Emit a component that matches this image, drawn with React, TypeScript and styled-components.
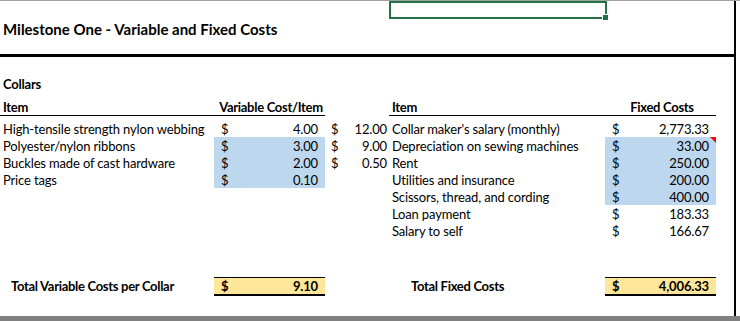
import styled, { createGlobalStyle, css } from "styled-components";

const GlobalStyle = createGlobalStyle`
    html, body {
        margin: 0;
        padding: 0;
        background: #fff;
    }
    body {
        font-family: Lato, "Liberation Sans", sans-serif;
        color: #000;
    }
`;

const Page = styled.div`
    position: relative;
    width: 740px;
    height: 321px;
    overflow: hidden;
    box-sizing: border-box;
    border-top: 1px solid #a0a0a0;
    display: flex;
    flex-direction: column;
`;

const Sheet = styled.div`
    width: 734px;
    flex: 1;
    border-right: 2px solid #000;
    display: flex;
    flex-direction: column;
`;

const TitleBand = styled.div`
    height: 56px;
    flex-shrink: 0;
    box-sizing: border-box;
    border-bottom: 3px solid #000;
    padding: 19px 0 0 3px;
    font-size: 15px;
    font-weight: 700;
    line-height: 18px;
`;

const SectionLabel = styled.div`
    margin-top: 20px;
    height: 15px;
    padding-left: 3px;
    font-size: 13px;
    font-weight: 700;
    letter-spacing: -0.2px;
    line-height: 15px;
`;

const Row = styled.div<{ $height?: number; $gap?: number }>`
    display: grid;
    grid-template-columns: 214px 111px 64px 216px 111px 18px;
    height: ${(p) => p.$height ?? 17}px;
    flex-shrink: 0;
    margin-top: ${(p) => p.$gap ?? 0}px;
    font-size: 13px;
    letter-spacing: -0.15px;
    line-height: 15px;
`;

type Fill = "blue" | "yellow" | undefined;

const fills = {
    blue: "#bdd7ee",
    yellow: "#ffe699",
};

const Cell = styled.div<{ $indent?: number; $bold?: boolean; $center?: boolean; $underline?: boolean; $pad?: number }>`
    position: relative;
    display: flex;
    align-items: flex-end;
    justify-content: ${(p) => (p.$center ? "center" : "flex-start")};
    padding-left: ${(p) => p.$indent ?? 3}px;
    padding-bottom: ${(p) => p.$pad ?? 0}px;
    font-weight: ${(p) => (p.$bold ? 700 : 400)};
    letter-spacing: ${(p) => (p.$bold ? "-0.3px" : "inherit")};
    white-space: nowrap;
    box-sizing: border-box;
    ${(p) =>
        p.$underline &&
        css`
            border-bottom: 1px solid #000;
        `}
`;

const Money = styled.div<{ $fill?: Fill; $bold?: boolean; $total?: boolean; $left?: number; $right?: number }>`
    position: relative;
    display: flex;
    align-items: flex-end;
    justify-content: space-between;
    padding: 0 ${(p) => p.$right ?? 7}px 0 ${(p) => p.$left ?? 7}px;
    box-sizing: border-box;
    background: ${(p) => (p.$fill ? fills[p.$fill] : "transparent")};
    font-weight: ${(p) => (p.$bold ? 700 : 400)};
    ${(p) =>
        p.$total &&
        css`
            border-top: 1px solid #000;
            border-bottom: 2px solid #000;
        `}
`;

const CommentMark = styled.span`
    position: absolute;
    top: 0;
    right: 0;
    width: 0;
    height: 0;
    border-top: 6px solid #ff0000;
    border-left: 6px solid transparent;
`;

const Selection = styled.div`
    position: absolute;
    left: 389px;
    top: 0;
    width: 218px;
    height: 18px;
    box-sizing: border-box;
    border: 2px solid #217346;
`;

const Handle = styled.span`
    position: absolute;
    right: -3px;
    bottom: -3px;
    width: 5px;
    height: 5px;
    background: #217346;
    border-left: 1px solid #fff;
    border-top: 1px solid #fff;
`;

const BottomBar = styled.div`
    height: 5px;
    flex-shrink: 0;
    background: #808080;
`;

type Amount = { value: string; fill?: Fill; comment?: boolean };

type Line = {
    item?: string;
    variable?: Amount;
    extended?: string;
    fixedItem: string;
    fixed: Amount;
};

const lines: Line[] = [
    {
        item: "High-tensile strength nylon webbing",
        variable: { value: "4.00" },
        extended: "12.00",
        fixedItem: "Collar maker's salary (monthly)",
        fixed: { value: "2,773.33" },
    },
    {
        item: "Polyester/nylon ribbons",
        variable: { value: "3.00", fill: "blue" },
        extended: "9.00",
        fixedItem: "Depreciation on sewing machines",
        fixed: { value: "33.00", fill: "blue", comment: true },
    },
    {
        item: "Buckles made of cast hardware",
        variable: { value: "2.00", fill: "blue" },
        extended: "0.50",
        fixedItem: "Rent",
        fixed: { value: "250.00", fill: "blue" },
    },
    {
        item: "Price tags",
        variable: { value: "0.10", fill: "blue" },
        fixedItem: "Utilities and insurance",
        fixed: { value: "200.00", fill: "blue" },
    },
    { fixedItem: "Scissors, thread, and cording", fixed: { value: "400.00", fill: "blue" } },
    { fixedItem: "Loan payment", fixed: { value: "183.33" } },
    { fixedItem: "Salary to self", fixed: { value: "166.67" } },
];

function MoneyCell({ amount }: { amount?: Amount }) {
    if (!amount) return <div />;
    return (
        <Money $fill={amount.fill}>
            <span>$</span>
            <span>{amount.value}</span>
            {amount.comment && <CommentMark />}
        </Money>
    );
}

export default function App() {
    return (
        <>
            <GlobalStyle />
            <Page>
                <Sheet>
                    <TitleBand>Milestone One - Variable and Fixed Costs</TitleBand>
                    <SectionLabel>Collars</SectionLabel>
                    <Row $height={23} $gap={1}>
                        <Cell $bold $underline>Item</Cell>
                        <Cell $bold $center $underline>Variable Cost/Item</Cell>
                        <div />
                        <Cell $bold $underline>Item</Cell>
                        <Cell $bold $center $underline>Fixed Costs</Cell>
                        <div />
                    </Row>
                    {lines.map((line, i) => (
                        <Row key={line.fixedItem} $gap={i === 0 ? 4 : 0}>
                            <Cell>{line.item}</Cell>
                            <MoneyCell amount={line.variable} />
                            {line.extended ? (
                                <Money $left={6} $right={2}>
                                    <span>$</span>
                                    <span>{line.extended}</span>
                                </Money>
                            ) : (
                                <div />
                            )}
                            <Cell>{line.fixedItem}</Cell>
                            <MoneyCell amount={line.fixed} />
                            <div />
                        </Row>
                    ))}
                    <Row $height={19} $gap={38}>
                        <Cell $bold $indent={11} $pad={2}>Total Variable Costs per Collar</Cell>
                        <Money $fill="yellow" $bold $total>
                            <span>$</span>
                            <span>9.10</span>
                        </Money>
                        <div />
                        <Cell $bold $indent={22} $pad={2}>Total Fixed Costs</Cell>
                        <Money $fill="yellow" $bold $total>
                            <span>$</span>
                            <span>4,006.33</span>
                        </Money>
                        <div />
                    </Row>
                </Sheet>
                <BottomBar />
                <Selection>
                    <Handle />
                </Selection>
            </Page>
        </>
    );
}
